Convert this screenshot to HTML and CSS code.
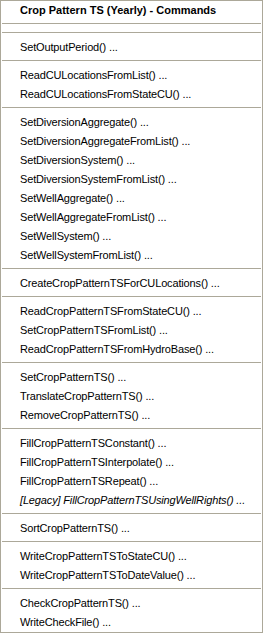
FILE: index.html
```html
<!DOCTYPE html>
<html>
<head>
  <title>Crop Pattern TS (Yearly) - Commands</title>
  <link rel="stylesheet" href="styles.css">
</head>
<body>
  <div class="menu">
    <div class="menu-title">Crop Pattern TS (Yearly) - Commands</div>
    <div class="sep"></div>
    <div class="sep"></div>
    <div class="item">SetOutputPeriod() ...</div>
    <div class="sep"></div>
    <div class="item">ReadCULocationsFromList() ...</div>
    <div class="item">ReadCULocationsFromStateCU() ...</div>
    <div class="sep"></div>
    <div class="item">SetDiversionAggregate() ...</div>
    <div class="item">SetDiversionAggregateFromList() ...</div>
    <div class="item">SetDiversionSystem() ...</div>
    <div class="item">SetDiversionSystemFromList() ...</div>
    <div class="item">SetWellAggregate() ...</div>
    <div class="item">SetWellAggregateFromList() ...</div>
    <div class="item">SetWellSystem() ...</div>
    <div class="item">SetWellSystemFromList() ...</div>
    <div class="sep"></div>
    <div class="item">CreateCropPatternTSForCULocations() ...</div>
    <div class="sep"></div>
    <div class="item">ReadCropPatternTSFromStateCU() ...</div>
    <div class="item">SetCropPatternTSFromList() ...</div>
    <div class="item">ReadCropPatternTSFromHydroBase() ...</div>
    <div class="sep"></div>
    <div class="item">SetCropPatternTS() ...</div>
    <div class="item">TranslateCropPatternTS() ...</div>
    <div class="item">RemoveCropPatternTS() ...</div>
    <div class="sep"></div>
    <div class="item">FillCropPatternTSConstant() ...</div>
    <div class="item">FillCropPatternTSInterpolate() ...</div>
    <div class="item">FillCropPatternTSRepeat() ...</div>
    <div class="item legacy">[Legacy] FillCropPatternTSUsingWellRights() ...</div>
    <div class="sep"></div>
    <div class="item">SortCropPatternTS() ...</div>
    <div class="sep"></div>
    <div class="item">WriteCropPatternTSToStateCU() ...</div>
    <div class="item">WriteCropPatternTSToDateValue() ...</div>
    <div class="sep"></div>
    <div class="item">CheckCropPatternTS() ...</div>
    <div class="item">WriteCheckFile() ...</div>
  </div>
</body>
</html>
```

FILE: styles.css
```css
body {
  margin: 0;
  background-color: #ffffff;
}
.menu {
  width: 263px;
  height: 633px;
  box-sizing: border-box;
  border: 1px solid #aca899;
  background-color: #ffffff;
  font-family: "Liberation Sans", Arial, sans-serif;
  font-size: 11px;
  color: #000000;
}
.menu-title, .item {
  height: 19px;
  line-height: 18px;
  padding-left: 19px;
  white-space: nowrap;
}
.item {
  letter-spacing: -0.15px;
}
.menu-title {
  font-weight: bold;
}
.legacy {
  font-style: italic;
}
.sep {
  height: 9px;
  padding: 3px 1px 0 1px;
  box-sizing: border-box;
}
.sep::before {
  content: "";
  display: block;
  height: 1px;
  background-color: #aca899;
}
```
